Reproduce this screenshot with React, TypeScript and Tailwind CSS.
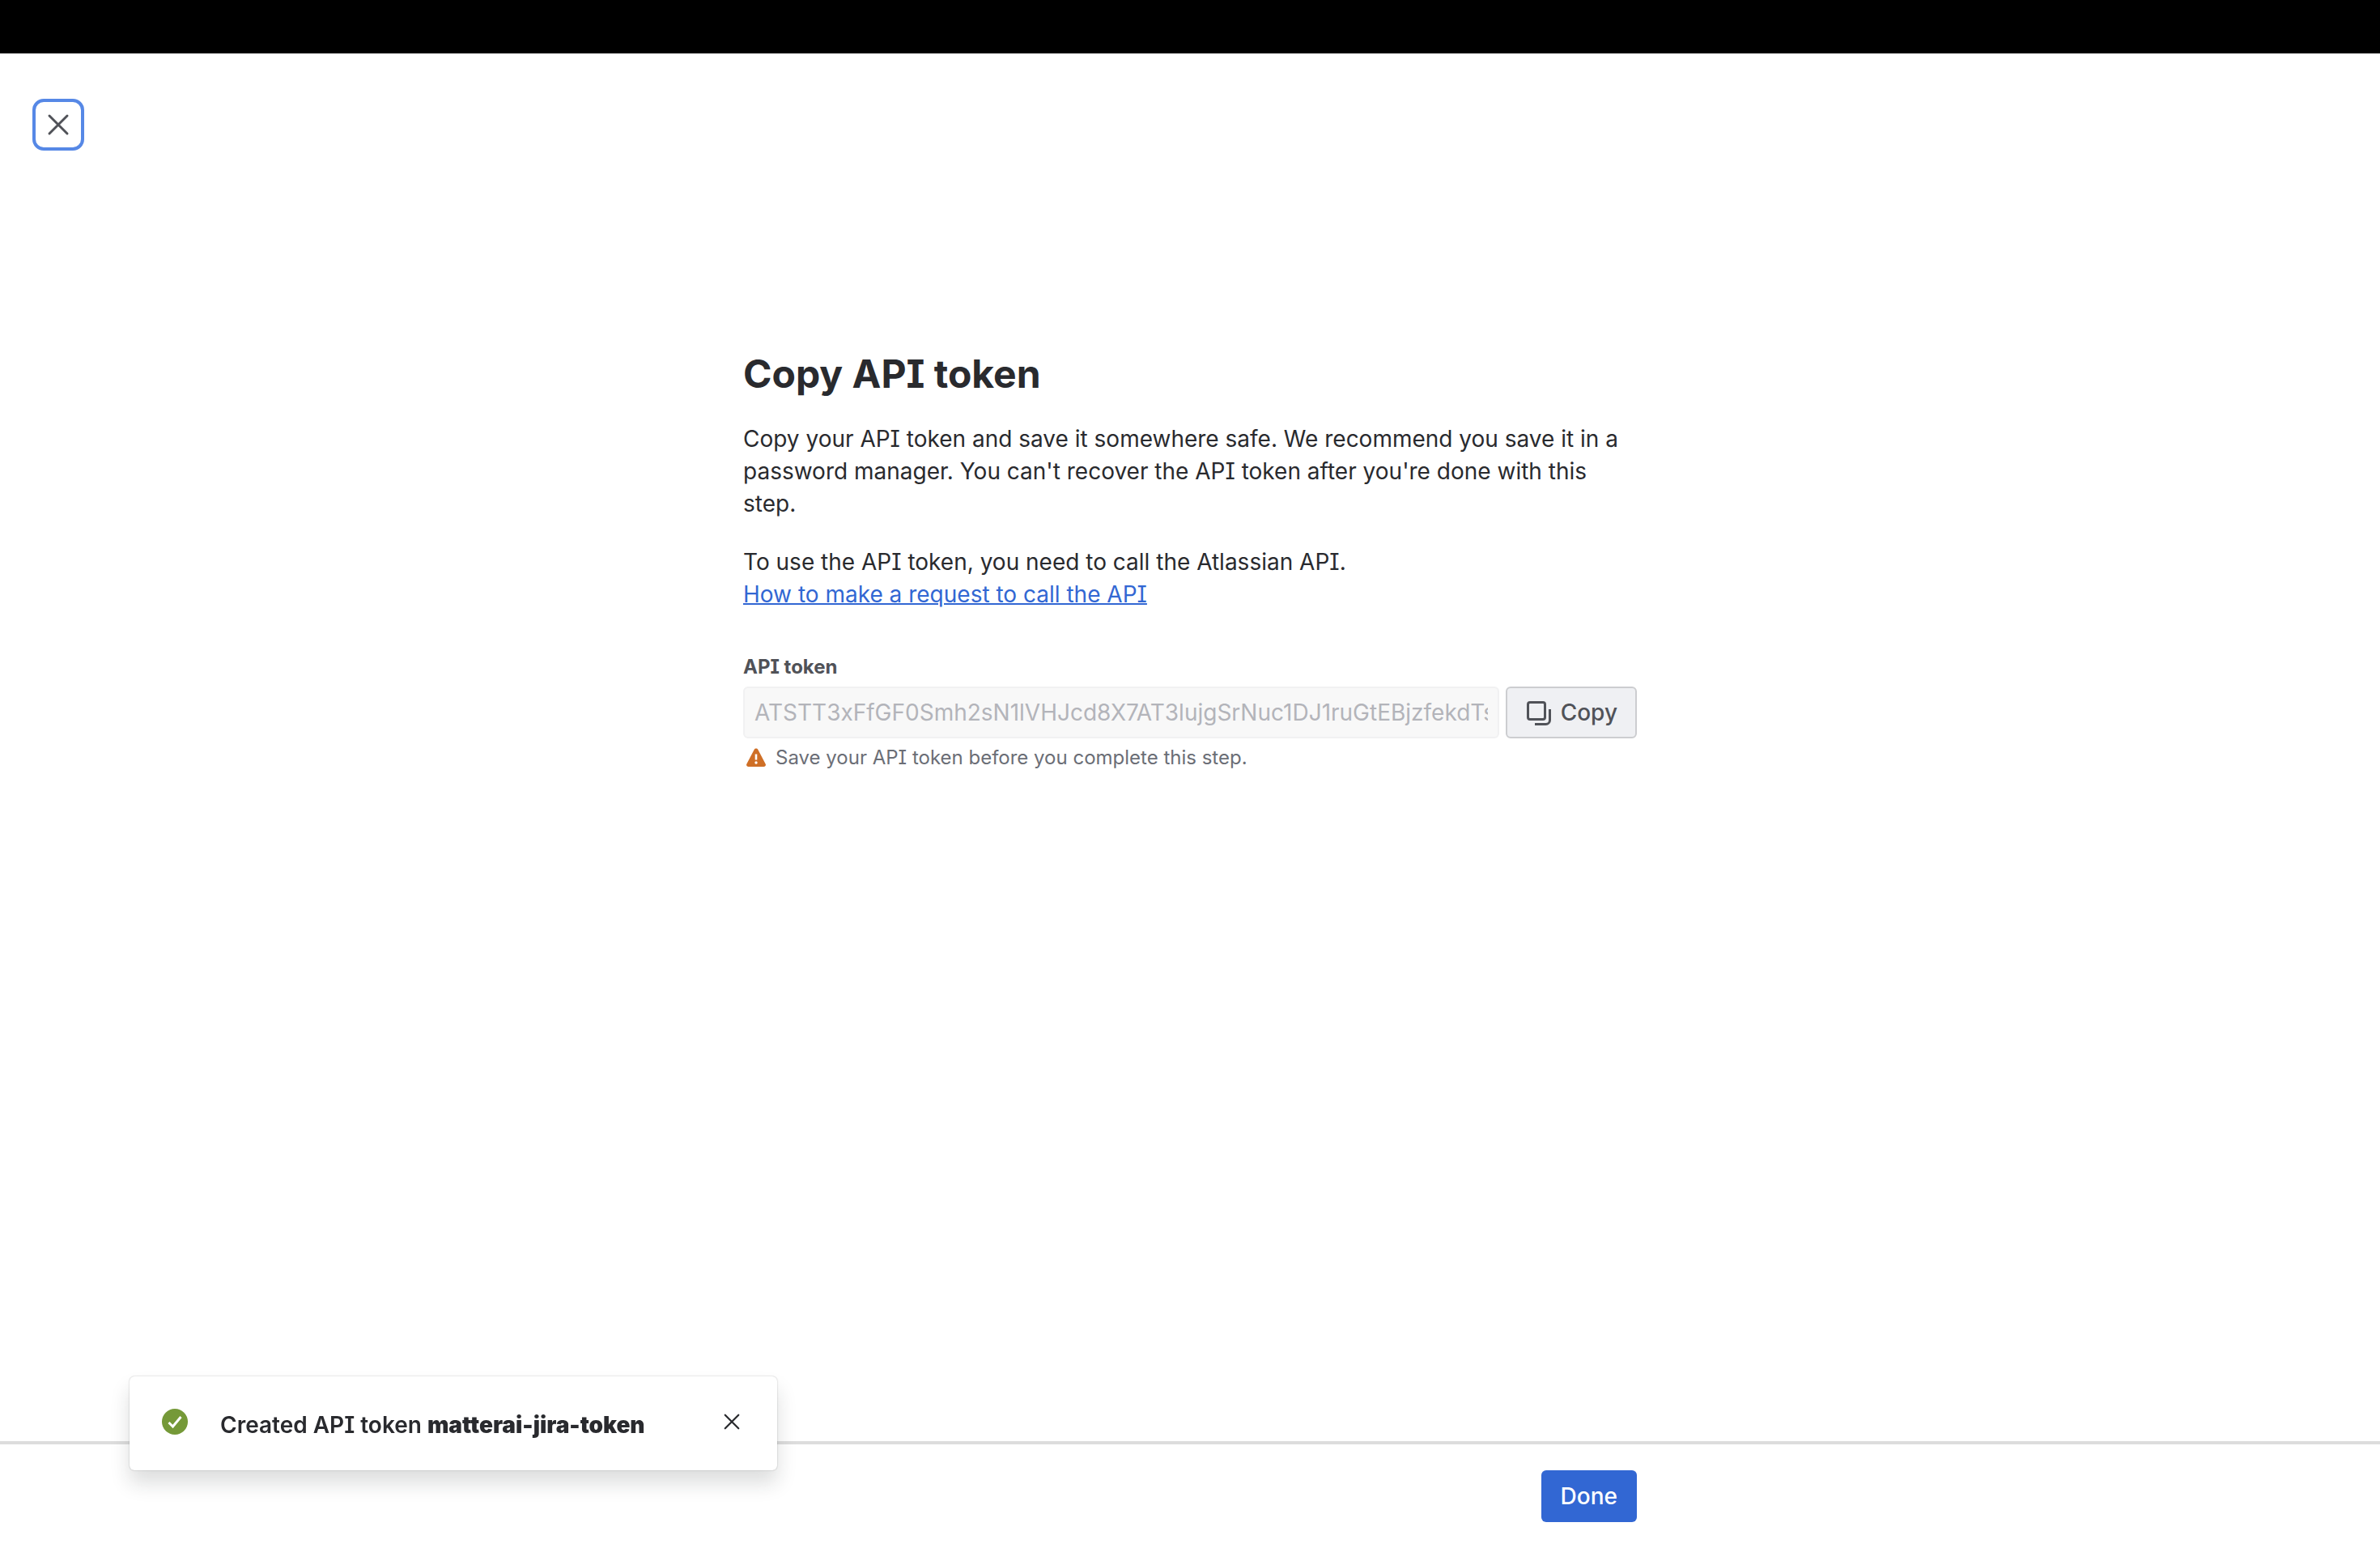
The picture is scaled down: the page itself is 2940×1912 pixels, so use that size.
import React, { useState } from 'react';

const TOKEN = 'ATSTT3xFfGF0Smh2sN1lVHJcd8X7AT3lujgSrNuc1DJ1ruGtEBjzfekdTsWq9Zx';

const CrossIcon: React.FC<{ className?: string }> = ({ className }) => (
  <svg className={className} viewBox="0 0 32 32" fill="none" stroke="currentColor" aria-hidden="true">
    <path d="M5 5L27 27M27 5L5 27" strokeWidth="3" strokeLinecap="round" />
  </svg>
);

const CopyIcon = () => (
  <svg className="size-8" viewBox="0 0 32 32" fill="none" stroke="currentColor" strokeWidth="3" aria-hidden="true">
    <rect x="3.5" y="3.5" width="21" height="21" rx="2.5" />
    <path d="M12 30.5H25.5C28.3 30.5 30.5 28.3 30.5 25.5V12" />
  </svg>
);

const WarningIcon = () => (
  <svg className="size-6" viewBox="0 0 24 24" aria-hidden="true">
    <path
      d="M9.6 1.9C10.6 0 13.4 0 14.4 1.9L23.6 19.6C24.6 21.4 23.4 23 21.4 23H2.6C0.6 23 -0.6 21.4 0.4 19.6Z"
      fill="#cf6f26"
    />
    <path d="M12 7.5V14.5" stroke="#fff" strokeWidth="2.6" />
    <circle cx="12" cy="18" r="1.7" fill="#fff" />
  </svg>
);

const SuccessIcon = () => (
  <svg className="size-8" viewBox="0 0 32 32" fill="none" aria-hidden="true">
    <circle cx="16" cy="16" r="16" fill="#759938" />
    <path d="M8.5 17L13.5 22L23.5 10" stroke="#fff" strokeWidth="3" />
  </svg>
);

const App: React.FC = () => {
  const [showFlag, setShowFlag] = useState(true);

  return (
    <div className="flex min-h-screen flex-col bg-white font-['Inter',sans-serif] text-[28px] leading-10 text-[#292a2e] [font-feature-settings:'cv08']">
      <div className="h-[66px] bg-black" />

      <header className="px-10 pt-14">
        <button
          type="button"
          aria-label="Close"
          className="flex size-16 items-center justify-center rounded-[14px] border-4 border-[#5688e6] text-[#505258]"
        >
          <CrossIcon className="size-8" />
        </button>
      </header>

      <main className="mx-auto w-full max-w-[1104px] flex-1 pt-62">
        <h1 className="text-5xl leading-14 font-bold">Copy API token</h1>
        <p className="mt-8">
          Copy your API token and save it somewhere safe. We recommend you save it in a password manager. You can't
          recover the API token after you're done with this step.
        </p>
        <p className="mt-8">
          To use the API token, you need to call the Atlassian API.
          <br />
          <a href="#request" className="text-[#3267d3] underline decoration-2">
            How to make a request to call the API
          </a>
        </p>

        <div className="mt-[54px]">
          <label htmlFor="api-token" className="block text-2xl leading-8 font-bold text-[#505258]">
            API token
          </label>
          <div className="mt-2 flex gap-2">
            <input
              id="api-token"
              type="text"
              disabled
              value={TOKEN}
              aria-describedby="api-token-help"
              className="h-16 min-w-0 flex-1 rounded-md border-2 border-[#f1f1f2] bg-[#f8f8f8] px-3 text-[#b3b4ba] [font-feature-settings:normal]"
            />
            <button
              type="button"
              className="flex h-16 items-center gap-3 rounded-md border-2 border-[#cccdd0] bg-[#eff0f3] px-[22px] font-medium text-[#505258]"
            >
              <CopyIcon />
              Copy
            </button>
          </div>
          <p id="api-token-help" className="mt-2 flex items-center gap-3 pl-1 text-2xl leading-8 text-[#6b6e76]">
            <WarningIcon />
            Save your API token before you complete this step.
          </p>
        </div>
      </main>

      <footer className="border-t-4 border-[#dddddd] py-8">
        <div className="mx-auto flex w-full max-w-[1104px] justify-end">
          <button type="button" className="h-16 rounded-md bg-[#3267d3] px-6 font-medium text-white">
            Done
          </button>
        </div>
      </footer>

      {/* Success flag */}
      {showFlag && (
        <div
          role="status"
          className="fixed bottom-24 left-40 flex w-200 items-start gap-10 rounded-md bg-white px-10 pt-10 pb-9 shadow-[0_16px_24px_rgba(30,31,33,0.15),0_0_2px_rgba(30,31,33,0.31)]"
        >
          <SuccessIcon />
          <p className="flex-1 font-semibold">
            Created API token <strong className="font-black">matterai-jira-token</strong>
          </p>
          <button
            type="button"
            aria-label="Dismiss"
            className="flex size-8 items-center justify-center"
            onClick={() => setShowFlag(false)}
          >
            <CrossIcon className="size-6" />
          </button>
        </div>
      )}
    </div>
  );
};

export default App;
